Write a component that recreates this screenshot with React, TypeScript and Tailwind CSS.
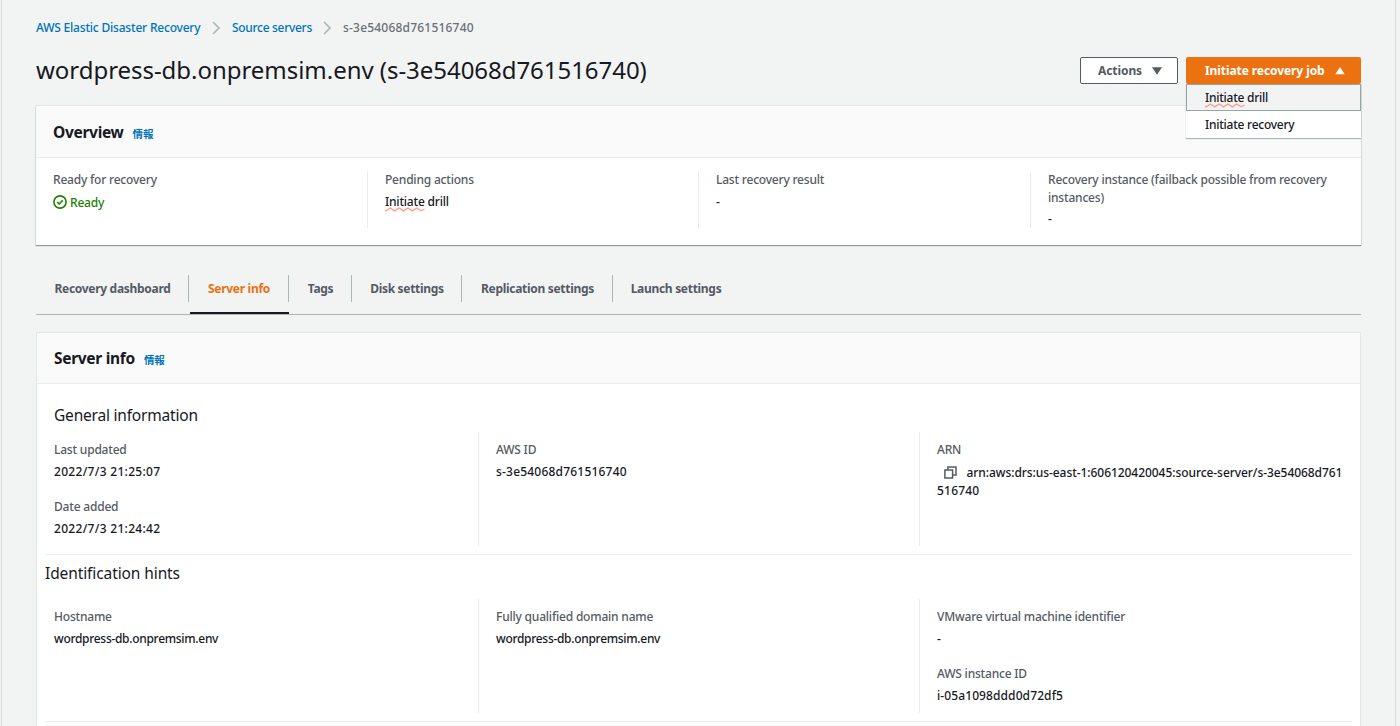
import type { ReactNode } from "react";
import clsx from "clsx";

function Chevron() {
  return (
    <svg width="9" height="14" viewBox="0 0 9 14" fill="none">
      <path d="M1 1L7 7L1 13" stroke="#aab7b8" strokeWidth="1.6" />
    </svg>
  );
}

function CheckCircle() {
  return (
    <svg width="14" height="14" viewBox="0 0 14 14" fill="none" stroke="#1d8102" strokeWidth="1.6">
      <circle cx="7" cy="7" r="6.1" />
      <path d="M4.2 7.1L6.2 9L9.8 5.4" />
    </svg>
  );
}

function CopyIcon() {
  return (
    <svg width="13" height="13" viewBox="0 0 13 13" fill="none" stroke="#545b64" strokeWidth="1.5" className="ml-[7px] mr-[9.5px] inline-block align-[-2px]">
      <path d="M0.9 4.1H8.6V12H0.9Z" />
      <path d="M3.9 4.1V1H12V9H8.6" />
    </svg>
  );
}

// spellchecker underline below the first word
function Misspelled({ children }: { children: ReactNode }) {
  return (
    <span className="relative inline-block">
      {children}
      <svg width="40" height="5" viewBox="0 0 40 5" fill="none" className="absolute left-0 top-[14px]">
        <path
          d="M0 3.2L1.5 3.8L5.3 1L9.7 3.8L14.1 1L18.5 3.8L22.9 1L27.3 3.8L31.7 1L36.1 3.8L39.5 2"
          stroke="#ff9c86"
          strokeWidth="1.4"
        />
      </svg>
    </span>
  );
}

function Field({ label, children, className }: { label: string; children: ReactNode; className?: string }) {
  return (
    <div className={clsx("leading-[17.5px]", className)}>
      <div className="text-[#545b64]">{label}</div>
      <div className="mt-1 text-[#16191f]">{children}</div>
    </div>
  );
}

function CardHeader({ title, className }: { title: string; className: string }) {
  return (
    <div className={clsx("flex items-center gap-[9px] border-b border-[#eaeded] bg-[#fafafa] pl-[17px]", className)}>
      <h2 className="text-[15.5px] font-bold tracking-[-0.3px] text-[#16191f]">{title}</h2>
      <a className="mt-[2px] font-['Noto_Sans_CJK_JP',sans-serif] text-[10.5px] font-bold text-[#0073bb]">情報</a>
    </div>
  );
}

const tabs = [
  { name: "Recovery dashboard", width: "w-[153px]" },
  { name: "Server info", width: "w-[100px]", active: true },
  { name: "Tags", width: "w-[63px]" },
  { name: "Disk settings", width: "w-[110px]" },
  { name: "Replication settings", width: "w-[151px]" },
  { name: "Launch settings", width: "w-[125px]" },
];

export default function App() {
  return (
    <div className="h-[726px] w-[1400px] overflow-hidden bg-[#f2f3f3] pl-px font-['Noto_Sans','Noto_Sans_CJK_JP',sans-serif] text-[12px] font-medium tracking-[-0.2px] text-[#16191f]">
      <div className="h-full w-[1395px] border-x border-[#d5dbdb] pl-[34px] pr-[34px]">
        {/* Breadcrumbs */}
        <nav className="flex h-[54px] items-center pt-px">
          <a className="w-[176px] text-[#0073bb]">AWS Elastic Disaster Recovery</a>
          <Chevron />
          <a className="ml-[11px] w-[91px] tracking-[-0.3px] text-[#0073bb]">Source servers</a>
          <Chevron />
          <span className="ml-[11px] tracking-[0.2px] text-[#687078]">s-3e54068d761516740</span>
        </nav>

        {/* Title and buttons */}
        <header className="flex h-[52px] items-start justify-between">
          <h1 className="text-[24px] font-normal leading-[32px] tracking-[-0.04px]">wordpress-db.onpremsim.env (s-3e54068d761516740)</h1>
          <div className="mt-[3px] flex gap-[8px] text-[12px] font-bold tracking-[-0.08px]">
            <button className="flex h-[27px] w-[98px] items-center justify-between rounded-[2px] border border-[#545b64] bg-white pl-[17px] pr-[15px] text-[#545b64]">
              Actions
              <svg width="10" height="8" viewBox="0 0 10 8" fill="#545b64">
                <path d="M0 0.3H10L5 7.8Z" />
              </svg>
            </button>
            <div className="relative">
              <button className="flex h-[27px] w-[175px] items-center justify-between rounded-[2px] bg-[#ec7211] pl-[19px] pr-4 text-white">
                Initiate recovery job
                <svg width="10" height="8" viewBox="0 0 10 8" fill="white">
                  <path d="M0.3 7.2H9.7L5 0Z" />
                </svg>
              </button>
              <ul className="absolute left-0 top-[27px] z-10 w-[175px] bg-white font-medium tracking-[-0.25px] shadow-[0_1px_1px_0_#aab7b8,1px_0_0_0_#d5dbdb]">
                <li className="flex h-[27px] items-center border border-[#95a5a6] bg-[#f2f3f3] pl-[18px]">
                  <span><Misspelled>Initiate</Misspelled> drill</span>
                </li>
                <li className="flex h-[27px] items-center pl-[19px]">Initiate recovery</li>
              </ul>
            </div>
          </div>
        </header>

        {/* Overview */}
        <section className="h-[139px] bg-white shadow-[0_1px_1px_0_#8f999a,0_0_0_1px_#e3e6e6]">
          <CardHeader title="Overview" className="h-[52px] pt-0.5" />
          <div className="grid grid-cols-[331px_331px_332px_331px] pt-[13px]">
            <div className="h-[57px] pl-[17px]">
              <Field label="Ready for recovery">
                <span className="flex items-center gap-[3px] pt-px text-[#1d8102]">
                  <CheckCircle /> Ready
                </span>
              </Field>
            </div>
            <div className="h-[57px] border-l border-[#eaeded] pl-[17px]">
              <Field label="Pending actions"><Misspelled>Initiate</Misspelled> drill</Field>
            </div>
            <div className="h-[57px] border-l border-[#eaeded] pl-[17px]">
              <Field label="Last recovery result">-</Field>
            </div>
            <div className="h-[57px] border-l border-[#eaeded] pl-[17px] pr-[30px]">
              <Field label="Recovery instance (failback possible from recovery instances)">-</Field>
            </div>
          </div>
        </section>

        {/* Tabs */}
        <div className="mt-[30px] flex h-[40px] items-start border-b border-[#aab7b8]">
          {tabs.map((tab, i) => (
            <div key={tab.name} className={clsx("relative h-[39px] shrink-0", tab.width)}>
              <div
                className={clsx(
                  "flex h-[27px] items-center justify-center pl-px font-bold tracking-[-0.3px]",
                  i < tabs.length - 1 && "border-r border-[#aab7b8]",
                  tab.active ? "text-[#ec7211]" : "text-[#545b64]"
                )}
              >
                {tab.name}
              </div>
              {tab.active && <div className="ml-px mt-[10px] h-[2px] w-[99px] bg-[#16191f]" />}
            </div>
          ))}
        </div>

        {/* Server info */}
        <section className="mx-px mt-[18px] h-[500px] bg-white shadow-[0_0_0_1px_#e3e6e6]">
          <CardHeader title="Server info" className="h-[51px] pt-0.5" />
          <div className="px-2">
            <div className="h-[171px] border-b border-[#eaeded]">
              <h3 className="h-[48px] pl-[9px] pt-5 text-[15.5px] font-normal leading-[23px] tracking-[-0.2px]">General information</h3>
              <div className="grid grid-cols-[433px_441px_433px]">
                <div className="h-[114px] pl-[9px] pt-[9px]">
                  <Field label="Last updated"><span className="tracking-[0.3px]">2022/7/3 21:25:07</span></Field>
                  <Field className="mt-[18px]" label="Date added"><span className="tracking-[0.3px]">2022/7/3 21:24:42</span></Field>
                </div>
                <div className="h-[114px] border-l border-[#eaeded] pl-[17px] pt-[9px]">
                  <Field label="AWS ID"><span className="tracking-[0.2px]">s-3e54068d761516740</span></Field>
                </div>
                <div className="h-[114px] border-l border-[#eaeded] pl-[17px] pt-[9px]">
                  <Field label="ARN">
                    <div className="pt-px leading-[18px] tracking-[-0.06px]">
                      <CopyIcon />arn:aws:drs:us-east-1:606120420045:source-server/s-3e54068d761<br />
                      <span className="tracking-[0.2px]">516740</span>
                    </div>
                  </Field>
                </div>
              </div>
            </div>
            <div className="h-[167px] border-b border-[#eaeded]">
              <h3 className="h-[44px] pt-[7px] text-[15.5px] font-normal leading-[23px] tracking-[-0.1px]">Identification hints</h3>
              <div className="grid grid-cols-[433px_441px_433px]">
                <div className="h-[114px] pl-[9px] pt-[9px]">
                  <Field label="Hostname"><span className="tracking-[-0.3px]">wordpress-db.onpremsim.env</span></Field>
                </div>
                <div className="h-[114px] border-l border-[#eaeded] pl-[17px] pt-[9px]">
                  <Field label="Fully qualified domain name"><span className="tracking-[-0.3px]">wordpress-db.onpremsim.env</span></Field>
                </div>
                <div className="h-[114px] border-l border-[#eaeded] pl-[17px] pt-[9px]">
                  <Field label="VMware virtual machine identifier">-</Field>
                  <Field className="mt-[18px]" label="AWS instance ID"><span className="tracking-[0.1px]">i-05a1098ddd0d72df5</span></Field>
                </div>
              </div>
            </div>
          </div>
        </section>
      </div>
    </div>
  );
}
